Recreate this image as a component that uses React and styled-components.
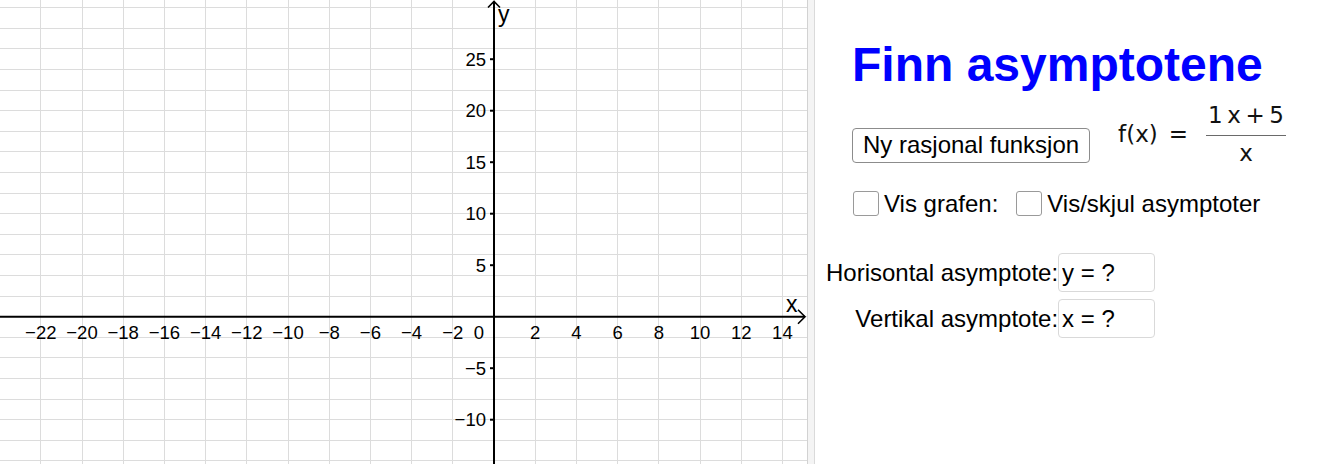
import React from 'react';
import styled, { createGlobalStyle } from 'styled-components';

const GlobalStyle = createGlobalStyle`
  html, body {
    margin: 0;
    padding: 0;
    background: #fff;
  }
  body {
    font-family: "Liberation Sans", Arial, sans-serif;
  }
`;

// graphics view coordinate system
const ORIGIN_X = 494;
const ORIGIN_Y = 316.7;
const UNIT_X = 20.6;
const UNIT_Y = 10.3;
const VIEW_W = 807;
const VIEW_H = 464;

const px = (v) => ORIGIN_X + v * UNIT_X;
const py = (v) => ORIGIN_Y - v * UNIT_Y;

const range = (from, to, step) => {
  const out = [];
  for (let v = from; v <= to; v += step) out.push(v);
  return out;
};

const gridXs = range(-26, 16, 2).map(px).filter((x) => x >= 0 && x <= VIEW_W);
const gridYs = range(-16, 32, 2).map(py).filter((y) => y >= 0 && y <= VIEW_H);
const xTicks = range(-22, 14, 2).filter((v) => v !== 0);
const yTicks = [25, 20, 15, 10, 5, -5, -10];
const fmt = (v) => (v < 0 ? `\u2212${-v}` : `${v}`);

const Applet = styled.div`
  display: flex;
  width: 1328px;
  height: 464px;
  overflow: hidden;
  background: #fff;
`;

const GraphView = styled.div`
  flex: none;
  box-sizing: border-box;
  width: 808px;
  height: 464px;
  border-right: 1px solid #d2d2d2;

  svg {
    display: block;
  }
`;

const Splitter = styled.div`
  flex: none;
  width: 6px;
  background: #f4f4f4;
  border-right: 1px solid #dadada;
`;

const AxisNumber = styled.text`
  font-family: "Liberation Sans", Arial, sans-serif;
  font-size: 18.5px;
  fill: #000;
`;

const AxisName = styled.text`
  font-family: "Liberation Sans", Arial, sans-serif;
  font-size: 23px;
  fill: #000;
`;

const Panel = styled.div`
  flex: 1;
  display: flex;
  flex-direction: column;
  font-size: 24px;
  color: #000;
`;

const Title = styled.h1`
  margin: 41px 0 0 37px;
  height: 48px;
  font-size: 48px;
  line-height: 48px;
  font-weight: 700;
  color: #0000ff;
  white-space: nowrap;
`;

const ActionRow = styled.div`
  display: flex;
  align-items: flex-start;
  gap: 28px;
  height: 66px;
  margin: 12px 0 0 37px;
`;

const Button = styled.button`
  box-sizing: border-box;
  height: 35px;
  margin-top: 26.7px;
  padding: 0 10px;
  font-family: inherit;
  font-size: 24px;
  color: #000;
  background: #fff;
  border: 1px solid #8c8c8c;
  border-radius: 4px;
  white-space: nowrap;
  cursor: pointer;
`;

const Formula = styled.div`
  display: flex;
  align-items: center;
  font-family: "DejaVu Sans", sans-serif;
  font-size: 23px;
  color: #111;
`;

const MathPart = styled.span`
  margin-right: ${(p) => p.$space || 0}px;
  white-space: nowrap;
`;

const Fraction = styled.span`
  display: flex;
  flex-direction: column;
  align-items: center;
`;

const FracPart = styled.span`
  height: 28px;
  line-height: 28px;
  padding: ${(p) => (p.$below ? '2.5px 2px 0' : '0 2px 6px')};
  white-space: nowrap;
`;

const FracBar = styled.span`
  align-self: stretch;
  height: 1px;
  background: #6a6a6a;
`;

const CheckRow = styled.div`
  display: flex;
  align-items: center;
  gap: 18px;
  height: 26px;
  margin: 23.7px 0 0 38px;
`;

const CheckGroup = styled.label`
  display: flex;
  align-items: center;
  gap: 5px;
  white-space: nowrap;
`;

const Box = styled.span`
  box-sizing: border-box;
  width: 26px;
  height: 25px;
  border: 1px solid #9a9a9a;
  border-radius: 3px;
  background: #fff;
`;

const AnswerGrid = styled.div`
  display: grid;
  grid-template-columns: auto auto;
  justify-content: start;
  align-items: center;
  column-gap: 0;
  row-gap: 7px;
  margin: 36.7px 0 0 11px;
`;

const AnswerLabel = styled.span`
  justify-self: end;
  white-space: nowrap;
`;

const AnswerInput = styled.input`
  box-sizing: border-box;
  width: 97px;
  height: 39px;
  padding: 0 3px;
  font-family: inherit;
  font-size: 24px;
  color: #000;
  background: #fff;
  border: 1px solid #d9d9d9;
  border-radius: 4px;
  outline: none;
`;

function Graphics() {
  return (
    <GraphView>
      <svg width={VIEW_W} height={VIEW_H} viewBox={`0 0 ${VIEW_W} ${VIEW_H}`}>
        <g stroke="#dcdcdc" strokeWidth="1" shapeRendering="crispEdges">
          {gridXs.map((x) => (
            <line key={`gx${x}`} x1={x} x2={x} y1={0} y2={VIEW_H} />
          ))}
          {gridYs.map((y) => (
            <line key={`gy${y}`} x1={0} x2={VIEW_W} y1={y} y2={y} />
          ))}
        </g>

        <g stroke="#000" strokeWidth="2" fill="none">
          <line x1={0} y1={ORIGIN_Y} x2={805} y2={ORIGIN_Y} />
          <line x1={ORIGIN_X} y1={1.5} x2={ORIGIN_X} y2={VIEW_H} />
          <polyline points={`798,${ORIGIN_Y - 7} 805,${ORIGIN_Y} 798,${ORIGIN_Y + 7}`} strokeWidth="1.6" />
          <polyline points="488,7.5 494,1.5 500,7.5" strokeWidth="1.6" />
          {yTicks.map((v) => (
            <line key={`ty${v}`} x1={ORIGIN_X - 4} x2={ORIGIN_X} y1={py(v)} y2={py(v)} />
          ))}
        </g>

        {xTicks.map((v) => (
          <AxisNumber key={`lx${v}`} x={px(v)} y={339.3} textAnchor="middle">
            {fmt(v)}
          </AxisNumber>
        ))}
        <AxisNumber x={484} y={339.3} textAnchor="end">
          0
        </AxisNumber>
        {yTicks.map((v) => (
          <AxisNumber key={`ly${v}`} x={486} y={py(v) + 6.6} textAnchor="end">
            {fmt(v)}
          </AxisNumber>
        ))}

        <AxisName x={786} y={312.3}>x</AxisName>
        <AxisName x={498} y={22}>y</AxisName>
      </svg>
    </GraphView>
  );
}

export default function App() {
  return (
    <>
      <GlobalStyle />
      <Applet>
        <Graphics />
        <Splitter />
        <Panel>
          <Title>Finn asymptotene</Title>

          <ActionRow>
            <Button type="button">Ny rasjonal funksjon</Button>
            <Formula>
              <MathPart $space={11}>f(x)</MathPart>
              <MathPart $space={18}>=</MathPart>
              <Fraction>
                <FracPart>1&#8201;x&#8201;+&#8201;5</FracPart>
                <FracBar />
                <FracPart $below>x</FracPart>
              </Fraction>
            </Formula>
          </ActionRow>

          <CheckRow>
            <CheckGroup>
              <Box />
              Vis grafen:
            </CheckGroup>
            <CheckGroup>
              <Box />
              Vis/skjul asymptoter
            </CheckGroup>
          </CheckRow>

          <AnswerGrid>
            <AnswerLabel>Horisontal asymptote:</AnswerLabel>
            <AnswerInput readOnly value="y = ?" />
            <AnswerLabel>Vertikal asymptote:</AnswerLabel>
            <AnswerInput readOnly value="x = ?" />
          </AnswerGrid>
        </Panel>
      </Applet>
    </>
  );
}
